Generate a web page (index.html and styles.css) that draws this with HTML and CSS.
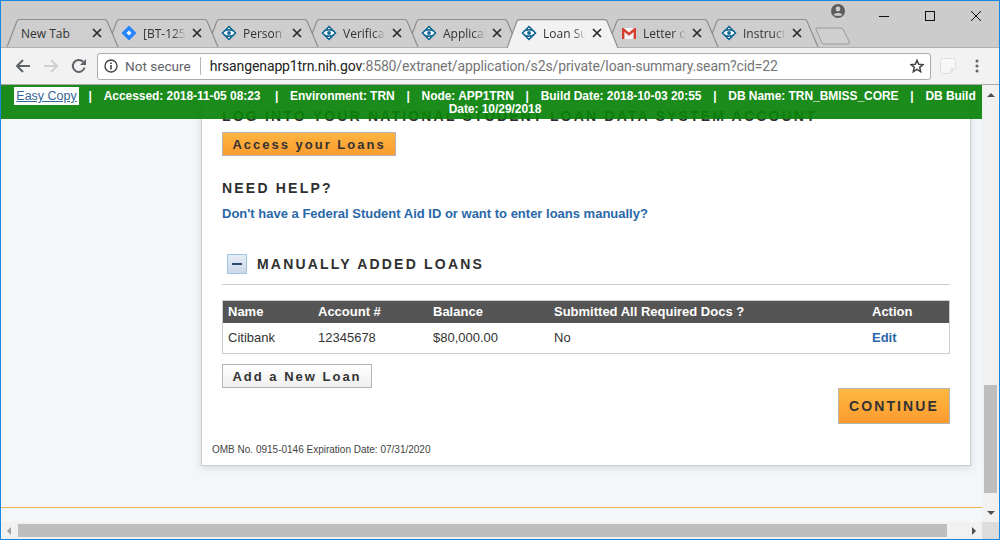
FILE: index.html
```html
<!DOCTYPE html>
<html lang="en">
<head>
<meta charset="utf-8">
<title>Loan Summary</title>
<link rel="stylesheet" href="styles.css">
</head>
<body>
<svg class="defs" width="0" height="0" aria-hidden="true">
  <symbol id="shape" viewBox="0 0 112 28" preserveAspectRatio="none"><path d="M0 28 L10 2 Q11 .5 13 .5 H97 Q99 .5 100 2 L111 28"/></symbol>
  <symbol id="close" viewBox="0 0 10 10"><path d="M1 1 L9 9 M9 1 L1 9" fill="none" stroke="#2b2b2b" stroke-width="1.7"/></symbol>
  <symbol id="nih" viewBox="0 0 16 16">
    <path d="M8 .8 15.2 8 8 15.2 .8 8Z" fill="#fff"/>
    <path d="M8 1.5 14.5 8 8 14.5 1.5 8Z" fill="none" stroke="#0d5f8c" stroke-width="1.5"/>
    <path d="M3 6.2 C6 4.5 10 4.5 13 6.2 M3 9.8 C6 11.5 10 11.5 13 9.8 M6 8 H10" fill="none" stroke="#11709f" stroke-width="1.5"/>
    <path d="M6 4 L10 12 M10 4 L6 12" fill="none" stroke="#0d5f8c" stroke-width="1"/>
  </symbol>
</svg>
<div class="window">
  <header class="strip">
    <div class="tabs">
      <div class="tab t1"><svg class="tab-shape"><use href="#shape"/></svg><span class="label">New Tab</span><svg class="x"><use href="#close"/></svg></div>
      <div class="tab t2"><svg class="tab-shape"><use href="#shape"/></svg>
        <svg class="fav" viewBox="0 0 16 16"><path d="M8 .5 15.5 8 8 15.5 .5 8Z" fill="#2684ff"/><path d="M8 5.4 10.6 8 8 10.6 5.4 8Z" fill="#fff"/></svg>
        <span class="label">[BT-1254</span><svg class="x"><use href="#close"/></svg></div>
      <div class="tab t3"><svg class="tab-shape"><use href="#shape"/></svg><svg class="fav"><use href="#nih"/></svg><span class="label">Person Summary</span><svg class="x"><use href="#close"/></svg></div>
      <div class="tab t4"><svg class="tab-shape"><use href="#shape"/></svg><svg class="fav"><use href="#nih"/></svg><span class="label">Verification</span><svg class="x"><use href="#close"/></svg></div>
      <div class="tab t5"><svg class="tab-shape"><use href="#shape"/></svg><svg class="fav"><use href="#nih"/></svg><span class="label">Application</span><svg class="x"><use href="#close"/></svg></div>
      <div class="tab t6 active"><svg class="tab-shape"><use href="#shape"/></svg><svg class="fav"><use href="#nih"/></svg><span class="label">Loan Summary</span><svg class="x"><use href="#close"/></svg></div>
      <div class="tab t7"><svg class="tab-shape"><use href="#shape"/></svg>
        <svg class="fav" viewBox="0 0 16 16"><path d="M1 3 H15 V14 H1Z" fill="#f4f4f4"/><path d="M1 14 V3 H2.6 L8 7.6 13.4 3 H15 V14 H12.6 V7 L8 10.8 3.4 7 V14Z" fill="#d6402f"/></svg>
        <span class="label">Letter of Credit</span><svg class="x"><use href="#close"/></svg></div>
      <div class="tab t8"><svg class="tab-shape"><use href="#shape"/></svg><svg class="fav"><use href="#nih"/></svg><span class="label">Instructions</span><svg class="x"><use href="#close"/></svg></div>
    </div>
    <svg class="newtab" viewBox="0 0 36 18"><path d="M1.5 1 H26 Q27.5 1 28 2 L34.5 15 Q35 17 33 17 H9 Q7.5 17 7 16 L1 2.5 Q.8 1 1.5 1Z" fill="#cfcfcf" stroke="#9a9a9a"/></svg>
    <svg class="avatar" viewBox="0 0 14 14"><circle cx="7" cy="7" r="7" fill="#5d5d5d"/><circle cx="7" cy="5" r="2.4" fill="#ccc"/><path d="M2.6 10.8 C4 8.4 10 8.4 11.4 10.8 C10 12.4 4 12.4 2.6 10.8Z" fill="#ccc"/></svg>
    <div class="winctl">
      <span class="winbtn"><svg width="12" height="12" viewBox="0 0 12 12"><path d="M1 6.5 H11" stroke="#111" stroke-width="1" fill="none"/></svg></span>
      <span class="winbtn"><svg width="12" height="12" viewBox="0 0 12 12"><rect x="1.5" y="1.5" width="9" height="9" stroke="#111" fill="none"/></svg></span>
      <span class="winbtn"><svg width="12" height="12" viewBox="0 0 12 12"><path d="M1 1 L11 11 M11 1 L1 11" stroke="#111" fill="none"/></svg></span>
    </div>
  </header>

  <nav class="toolbar">
    <svg class="navicon" viewBox="0 0 16 16"><path d="M15 8 H2 M8 2 L2 8 L8 14" fill="none" stroke="#5f6368" stroke-width="2"/></svg>
    <svg class="navicon" viewBox="0 0 16 16"><path d="M1 8 H14 M8 2 L14 8 L8 14" fill="none" stroke="#cfcfcf" stroke-width="2"/></svg>
    <svg class="navicon" viewBox="0 0 16 16"><path d="M13.6 9.5 A6 6 0 1 1 12.2 3.8" fill="none" stroke="#5f6368" stroke-width="2"/><path d="M15 1 V7 H9Z" fill="#5f6368"/></svg>
    <div class="omnibox">
      <svg class="info" viewBox="0 0 14 14"><circle cx="7" cy="7" r="6" fill="none" stroke="#444" stroke-width="1.4"/><path d="M7 6 V10.5 M7 3.4 V5" stroke="#444" stroke-width="1.6" fill="none"/></svg>
      <span class="secure">Not secure</span>
      <span class="omnisep"></span>
      <span class="url"><span class="host">hrsangenapp1trn.nih.gov</span>:8580/extranet/application/s2s/private/loan-summary.seam?cid=22</span>
      <svg class="star" viewBox="0 0 14 14"><path d="M7 1.2 8.7 5.2 13 5.6 9.7 8.4 10.7 12.7 7 10.4 3.3 12.7 4.3 8.4 1 5.6 5.3 5.2Z" fill="none" stroke="#444" stroke-width="1.5"/></svg>
    </div>
    <svg class="ext" viewBox="0 0 16 16"><path d="M3 .5 H13 Q15.5 .5 15.5 3 V10 L10 15.5 H3 Q.5 15.5 .5 13 V3 Q.5 .5 3 .5Z" fill="#f7f7f7" stroke="#dedede"/><path d="M15.5 10 H11 Q10 10 10 11 V15.5Z" fill="#e6e6e6"/></svg>
    <svg class="menu" viewBox="0 0 4 14"><circle cx="2" cy="2" r="1.5" fill="#5f6368"/><circle cx="2" cy="7" r="1.5" fill="#5f6368"/><circle cx="2" cy="12" r="1.5" fill="#5f6368"/></svg>
  </nav>

  <div class="viewport">
    <main class="pane">
      <div class="envbar"><button class="easy">Easy Copy</button><span class="sep">|</span>Accessed: 2018-11-05 08:23<span class="sep sep-wide">|</span>Environment: TRN<span class="sep">|</span>Node: APP1TRN<span class="sep">|</span>Build Date: 2018-10-03 20:55<span class="sep">|</span>DB Name: TRN_BMISS_CORE<span class="sep">|</span>DB Build Date: 10/29/2018</div>
      <section class="card">
        <h2 class="h-log">LOG INTO YOUR NATIONAL STUDENT LOAN DATA SYSTEM ACCOUNT</h2>
        <a class="btn btn-access">Access your Loans</a>
        <h2 class="h-help">NEED HELP?</h2>
        <a class="link-manual">Don't have a Federal Student Aid ID or want to enter loans manually?</a>
        <div class="sechead">
          <span class="toggle"><span class="minus"></span></span>
          <h2 class="h-manual">MANUALLY ADDED LOANS</h2>
        </div>
        <table class="loans">
          <colgroup><col class="c1"><col class="c2"><col class="c3"><col class="c4"><col class="c5"></colgroup>
          <thead><tr><th>Name</th><th>Account #</th><th>Balance</th><th>Submitted All Required Docs ?</th><th>Action</th></tr></thead>
          <tbody><tr><td>Citibank</td><td>12345678</td><td>$80,000.00</td><td>No</td><td><a class="edit">Edit</a></td></tr></tbody>
        </table>
        <a class="btn btn-add">Add a New Loan</a>
        <div class="actions"><a class="btn btn-continue">CONTINUE</a></div>
        <p class="omb">OMB No. 0915-0146 Expiration Date: 07/31/2020</p>
      </section>
      <div class="pagefoot"></div>
    </main>
    <div class="vscroll">
      <span class="arrow up"></span>
      <span class="vthumb"></span>
      <span class="arrow down"></span>
    </div>
    <div class="hscroll">
      <span class="arrow left"></span>
      <span class="hthumb"></span>
      <span class="arrow right"></span>
    </div>
    <div class="corner"></div>
  </div>
</div>
</body>
</html>
```
FILE: styles.css
```css
* { box-sizing: border-box; }
html, body { margin: 0; padding: 0; }
body { width: 1000px; height: 540px; overflow: hidden; font-family: "Liberation Sans", Arial, sans-serif; }
.defs { position: absolute; }
.window { width: 1000px; height: 540px; border: 1px solid #1b86e0; display: flex; flex-direction: column; background: #f4f7fa; }

/* tab strip */
.strip { height: 47px; flex: none; background: #cccccc; border-bottom: 1px solid #b0b0b0; display: flex; align-items: flex-start; position: relative; }
.tabs { display: flex; margin: 18px 0 0 6px; height: 28px; }
.tab { width: 100px; height: 28px; position: relative; display: flex; align-items: center; padding: 0 5px 0 14px; font: 12px "Open Sans", sans-serif; color: #333; }
.t1 { z-index: 8; } .t2 { z-index: 7; } .t3 { z-index: 6; } .t4 { z-index: 5; }
.t5 { z-index: 4; } .t7 { z-index: 3; } .t8 { z-index: 2; }
.t6 { z-index: 9; }
.tab-shape { position: absolute; left: 0; top: 0; width: 112px; height: 28px; fill: #cecece; stroke: #8e8e8e; stroke-width: 1.2; overflow: visible; }
.active .tab-shape { fill: #f2f2f2; height: 29px; }
.fav { position: relative; width: 16px; height: 16px; flex: none; margin-right: 6px; }
.label { position: relative; flex: 1; min-width: 0; white-space: nowrap; overflow: hidden; -webkit-mask-image: linear-gradient(90deg, #000 70%, transparent 100%); mask-image: linear-gradient(90deg, #000 70%, transparent 100%); }
.t1 .label { -webkit-mask-image: none; mask-image: none; }
.x { position: relative; width: 10px; height: 10px; flex: none; margin-left: 6px; }
.newtab { width: 36px; height: 18px; margin: 26px 0 0 8px; flex: none; position: relative; z-index: 1; }
.avatar { width: 14px; height: 14px; margin: 3px auto 0 -20px; flex: none; }
.winctl { display: flex; flex: none; }
.winbtn { width: 46px; height: 29px; display: flex; align-items: center; justify-content: center; }

/* toolbar */
.toolbar { height: 37px; flex: none; background: #f2f2f2; border-bottom: 1px solid #a9a9a9; display: flex; align-items: center; padding: 0 0 0 14px; }
.navicon { width: 16px; height: 16px; flex: none; margin-right: 12px; }
.omnibox { width: 834px; height: 27px; margin-left: -2px; flex: none; background: #fff; border: 1px solid #aaa; border-radius: 3px; display: flex; align-items: center; padding: 0 6px 0 6px; font: 14px Roboto, sans-serif; color: #757575; white-space: nowrap; }
.info { width: 14px; height: 14px; flex: none; margin-right: 7px; }
.secure { color: #5f6368; font-size: 13.6px; }
.omnisep { width: 1px; height: 18px; background: #b5b5b5; margin: 0 9px; flex: none; }
.url { flex: 1; letter-spacing: -.12px; }
.host { color: #222; }
.star { width: 14px; height: 14px; flex: none; }
.ext { width: 16px; height: 16px; flex: none; margin-left: 9px; }
.menu { width: 4px; height: 14px; flex: none; margin-left: 19px; }

/* page viewport */
.viewport { flex: 1; min-height: 0; display: grid; grid-template-columns: 981px 17px; grid-template-rows: 437px 17px; }
.pane { position: relative; overflow: hidden; background: #f4f7fa; }
.envbar { position: absolute; left: 0; top: 0; width: 981px; height: 34px; padding: 2px 1px 0 8px; z-index: 5; background: rgba(10, 130, 10, .93); color: #fff; font-size: 12px; font-weight: bold; line-height: 13px; letter-spacing: -.05px; text-align: center; }
.sep { margin: 0 11.8px; }
.sep-wide { margin-left: 14.5px; }
.easy { display: inline-block; margin: 0 -2px -5px 0; padding: 0 2px; height: 18px; border: 0; background: #fff; color: #336699; font: 12.5px/18px "Liberation Sans", sans-serif; text-decoration: underline; vertical-align: baseline; }

.card { width: 770px; margin-left: 200px; height: 381px; padding: 23px 20px 0; background: #fff; border: 1px solid #ccc; border-top: 0; box-shadow: 0 2px 8px rgba(120, 130, 140, .25); }
h2 { margin: 0; color: #2f2f2f; font-size: 14px; line-height: 16px; font-weight: bold; }
.h-log { letter-spacing: 2.18px; white-space: nowrap; }
.h-help { letter-spacing: 2.2px; margin-top: 24px; }
.h-manual { letter-spacing: 2.2px; }
.btn { display: block; font-weight: bold; color: #333; text-align: center; border: 1px solid #b5b5b5; }
.btn-access { width: 174px; height: 24px; margin-top: 8px; font-size: 13px; line-height: 23px; letter-spacing: 2px; background: linear-gradient(#ffb53f, #fb9c30); }
.link-manual { display: block; margin-top: 11px; color: #2a67a8; font-size: 13px; line-height: 14px; font-weight: bold; }
.sechead { display: flex; align-items: center; gap: 10px; margin-top: 33px; padding: 0 0 10px 5px; border-bottom: 1px solid #ccc; }
.toggle { width: 20px; height: 20px; display: flex; align-items: center; justify-content: center; border: 1px solid #9cc6e4; background: linear-gradient(#e6ecf4, #cdd8e8); }
.minus { width: 10px; height: 2px; background: #2b4a6f; }
.loans { width: 728px; margin-top: 15px; border-collapse: separate; border-spacing: 0; table-layout: fixed; border: 1px solid #ccc; font-size: 13px; }
.c1 { width: 90px; } .c2 { width: 115px; } .c3 { width: 121px; } .c4 { width: 318px; } .c5 { width: 82px; }
.loans th { height: 22px; padding: 0 0 2px 5px; background: #555; color: #fff; text-align: left; font-weight: bold; }
.loans td { height: 30px; padding: 0 0 2px 5px; color: #333; }
.edit { color: #2a67a8; font-weight: bold; }
.btn-add { width: 150px; height: 24px; margin-top: 10px; font-size: 13px; line-height: 23px; letter-spacing: 2px; background: linear-gradient(#fff, #efefef); }
.actions { display: flex; justify-content: flex-end; }
.btn-continue { width: 112px; height: 36px; font-size: 14px; line-height: 34px; letter-spacing: 2.1px; background: linear-gradient(#ffb940, #fb9a2f); }
.omb { margin: 20px 0 0 -10px; font-size: 10px; line-height: 12px; color: #444; }
.pagefoot { margin-top: 41px; border-top: 1px solid #ecb34f; }

/* scrollbars */
.vscroll { background: #f1f1f1; display: flex; flex-direction: column; align-items: center; padding-top: 8px; }
.vthumb { width: 13px; height: 108px; background: #bebebe; margin-top: 288px; }
.hscroll { background: #f1f1f1; display: flex; align-items: center; padding-left: 6px; }
.hthumb { width: 929px; height: 13px; background: #bebebe; margin-left: 7px; }
.corner { background: #dcdcdc; }
.arrow { width: 0; height: 0; flex: none; border-style: solid; border-color: transparent; }
.up { border-width: 0 4px 4px; border-bottom-color: #505050; }
.down { border-width: 4px 4px 0; border-top-color: #505050; margin-top: 18px; }
.left { border-width: 4px 4px 4px 0; border-right-color: #a0a0a0; }
.right { border-width: 4px 0 4px 4px; border-left-color: #505050; margin-left: 25px; }
```
